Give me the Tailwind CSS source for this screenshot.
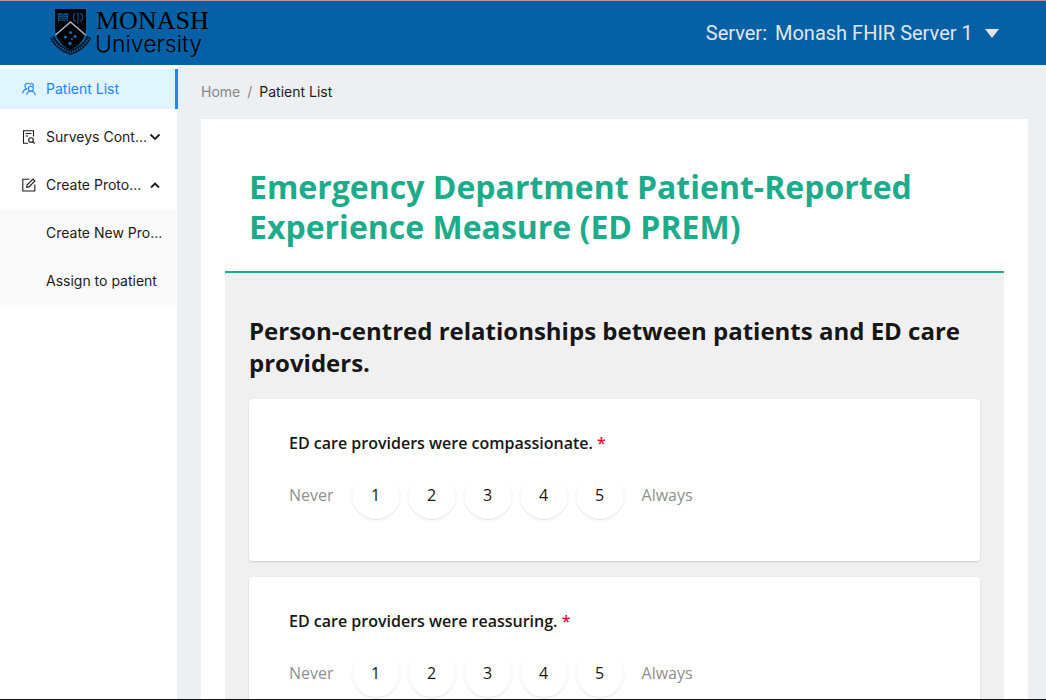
<!DOCTYPE html>
<html lang="en">
<head>
<meta charset="utf-8">
<meta name="viewport" content="width=device-width, initial-scale=1">
<title>Patient List</title>
<script src="https://cdn.jsdelivr.net/npm/@tailwindcss/browser@4"></script>
</head>
<body class="flex h-screen flex-col overflow-hidden border-t border-b border-t-[#b59a98] border-b-[#111111] bg-[#eeeff3] font-['Inter',sans-serif] text-sm text-[#1c1c1c]">
<header class="flex h-16 shrink-0 items-center justify-between bg-[#0461a6] pl-12 pr-[47px]">
  <a href="#" aria-label="Monash University" class="block">
    <svg width="166" height="56" viewBox="0 0 166 56" fill="#000">
      <path d="M4 32Q9 43 22.500 47.500Q36 43 41 32" fill="none" stroke="#04111f" stroke-width="4.600"/>
      <path d="M4 32.500Q9 43 22.500 47.500Q36 43 41 32.500" fill="none" stroke="#0461a6" stroke-width="2.200" stroke-dasharray="1.400 1.200"/>
      <path d="M7 4H38V24Q37 38 22.500 45Q8 38 7 24Z"/>
      <path d="M7.500 30L22.500 17L37.500 30" fill="none" stroke="#a9bccd" stroke-width="1.400"/>
      <path d="M10 8.500Q12.500 7.500 15 9Q17.500 7.500 20 8.500V16Q17.500 15 15 16.500Q12.500 15 10 16Z" fill="#0a4f85"/>
      <path d="M15 9V17M11 10.500h3M11 12.500h3M11 14.300h3M16 10.500h3M16 12.500h3M16 14.300h3" stroke="#000" stroke-width=".6"/>
      <path d="M27.500 8Q23 12 27.500 16.500M32.500 8Q37 12 32.500 16.500M30 7V18" fill="none" stroke="#0a559a" stroke-width="1.100"/>
      <g fill="#0b6fb8"><circle cx="22.500" cy="27.500" r="1.600"/><circle cx="17.500" cy="32" r="1.600"/><circle cx="27" cy="31.500" r="1.600"/><circle cx="24" cy="34" r="1"/><circle cx="22" cy="38.500" r="1.700"/></g>
      <text x="48" y="24" font-family="Liberation Serif, serif" font-size="26">MONASH</text>
      <text x="47" y="47" font-family="Inter, sans-serif" font-size="23" font-weight="300">University</text>
    </svg>
  </a>
  <div class="flex items-center gap-2 text-xl text-[#e3e5e8] font-['Roboto',sans-serif]">
    <label for="server">Server:</label>
    <div class="flex items-center gap-3">
      <select id="server" class="appearance-none bg-transparent outline-none">
        <option>Monash FHIR Server 1</option>
      </select>
      <svg width="14" height="9" viewBox="0 0 14 9" fill="currentColor" aria-hidden="true"><path d="M0 0H14L7 9Z"/></svg>
    </div>
  </div>
</header>
<div class="flex min-h-0 flex-1">
  <nav class="mr-px w-[177px] shrink-0 bg-white pt-1">
    <ul>
      <li class="-mr-px">
        <a href="#" class="flex h-10 items-center gap-2.5 border-r-[3px] border-[#1f84fb] bg-[#e0f5ff] pl-[22px] text-[#1f84fb]">
          <svg width="14" height="14" viewBox="0 0 14 14" fill="none" stroke="currentColor" stroke-width="1.100" stroke-linecap="round" aria-hidden="true"><circle cx="8.800" cy="6.800" r="2.500"/><path d="M4.800 12.800Q5.200 9.300 8.800 9.300Q12.600 9.300 13.200 12.800M8.400 2.500Q7.300 1 5.300 1.200Q3 1.600 2.900 4Q3 6.200 5 6.900Q1.400 7.500 .7 11M9 1.200Q11.300 1.500 11.500 4"/></svg>
          <span>Patient List</span>
        </a>
      </li>
      <li class="pt-2">
        <button type="button" aria-expanded="false" class="flex h-10 w-full items-center gap-2.5 pl-[22px] pr-4 text-left">
          <svg class="shrink-0" width="14" height="14" viewBox="0 0 14 14" fill="none" stroke="currentColor" stroke-width="1.100" aria-hidden="true"><path d="M6 13.200H1.500V.8H11.500V6.500M3.500 3.500H9.500M3.500 6H6"/><circle cx="9" cy="10" r="2.300"/><path d="M10.700 11.700L12.700 13.500"/></svg>
          <span class="min-w-0 flex-1 whitespace-nowrap">Surveys Cont...</span>
          <svg class="-ml-2 shrink-0" width="12" height="12" viewBox="0 0 12 12" fill="none" stroke="currentColor" stroke-width="1.800" aria-hidden="true"><path d="M1.500 3.500L6 8L10.500 3.500"/></svg>
        </button>
      </li>
      <li class="pt-2">
        <button type="button" aria-expanded="true" class="flex h-10 w-full items-center gap-2.5 pl-[22px] pr-4 text-left">
          <svg class="shrink-0" width="14" height="14" viewBox="0 0 14 14" fill="none" stroke="currentColor" stroke-width="1.100" aria-hidden="true"><path d="M7.500 1.200H.8V13H12.800V6.500M4.800 9.300L5 7L11 1L12.900 2.900L7 8.900Z"/></svg>
          <span class="min-w-0 flex-1 whitespace-nowrap">Create Proto...</span>
          <svg class="-ml-2 shrink-0" width="12" height="12" viewBox="0 0 12 12" fill="none" stroke="currentColor" stroke-width="1.800" aria-hidden="true"><path d="M2 8.500L6 4.500L10 8.500"/></svg>
        </button>
        <ul class="mt-1 bg-[#fafafa] py-1">
          <li><a href="#" class="block pl-[46px] leading-10 whitespace-nowrap">Create New Pro...</a></li>
          <li class="mt-2"><a href="#" class="block pl-[46px] leading-10 whitespace-nowrap">Assign to patient</a></li>
        </ul>
      </li>
    </ul>
  </nav>
  <main class="min-w-0 flex-1 overflow-hidden pl-[23px] pr-[18px]">
    <nav aria-label="Breadcrumb" class="flex h-[54px] items-center gap-[7px] text-[#85868a]">
      <a href="#">Home</a><span>/</span><span class="text-[#1c1c1c]">Patient List</span>
    </nav>
    <form class="bg-white px-6 font-['Open_Sans',sans-serif]">
      <div class="border-b-2 border-[#1eab8b] px-6 pt-12 pb-6">
        <h1 class="text-[32px] leading-10 font-bold text-[#1eab8b]">Emergency Department Patient-Reported Experience Measure (ED PREM)</h1>
      </div>
      <div class="bg-[#f0f0f0] px-6 pt-[42px] pb-6">
        <h2 class="mb-5 text-2xl leading-8 font-bold text-[#161616]">Person-centred relationships between patients and ED care providers.</h2>
        <div class="flex flex-col gap-4 text-base">
          <fieldset class="rounded bg-white px-10 pt-8 pb-[42px] shadow-[0_1px_2px_rgba(0,0,0,0.15)]">
            <legend class="float-left w-full font-semibold text-[#161616]">ED care providers were compassionate. <span class="text-[#e60a3e]">*</span></legend>
            <div class="clear-both flex items-center gap-[18px] pt-4 text-[#909090]">
              <span>Never</span>
              <div class="flex gap-2 text-[#161616]">
                <label class="flex size-12 items-center justify-center rounded-full shadow-[0_1px_2px_rgba(0,0,0,0.12)]"><input type="radio" name="compassionate" value="1" class="sr-only">1</label>
                <label class="flex size-12 items-center justify-center rounded-full shadow-[0_1px_2px_rgba(0,0,0,0.12)]"><input type="radio" name="compassionate" value="2" class="sr-only">2</label>
                <label class="flex size-12 items-center justify-center rounded-full shadow-[0_1px_2px_rgba(0,0,0,0.12)]"><input type="radio" name="compassionate" value="3" class="sr-only">3</label>
                <label class="flex size-12 items-center justify-center rounded-full shadow-[0_1px_2px_rgba(0,0,0,0.12)]"><input type="radio" name="compassionate" value="4" class="sr-only">4</label>
                <label class="flex size-12 items-center justify-center rounded-full shadow-[0_1px_2px_rgba(0,0,0,0.12)]"><input type="radio" name="compassionate" value="5" class="sr-only">5</label>
              </div>
              <span>Always</span>
            </div>
          </fieldset>
          <fieldset class="rounded bg-white px-10 pt-8 pb-[42px] shadow-[0_1px_2px_rgba(0,0,0,0.15)]">
            <legend class="float-left w-full font-semibold text-[#161616]">ED care providers were reassuring. <span class="text-[#e60a3e]">*</span></legend>
            <div class="clear-both flex items-center gap-[18px] pt-4 text-[#909090]">
              <span>Never</span>
              <div class="flex gap-2 text-[#161616]">
                <label class="flex size-12 items-center justify-center rounded-full shadow-[0_1px_2px_rgba(0,0,0,0.12)]"><input type="radio" name="reassuring" value="1" class="sr-only">1</label>
                <label class="flex size-12 items-center justify-center rounded-full shadow-[0_1px_2px_rgba(0,0,0,0.12)]"><input type="radio" name="reassuring" value="2" class="sr-only">2</label>
                <label class="flex size-12 items-center justify-center rounded-full shadow-[0_1px_2px_rgba(0,0,0,0.12)]"><input type="radio" name="reassuring" value="3" class="sr-only">3</label>
                <label class="flex size-12 items-center justify-center rounded-full shadow-[0_1px_2px_rgba(0,0,0,0.12)]"><input type="radio" name="reassuring" value="4" class="sr-only">4</label>
                <label class="flex size-12 items-center justify-center rounded-full shadow-[0_1px_2px_rgba(0,0,0,0.12)]"><input type="radio" name="reassuring" value="5" class="sr-only">5</label>
              </div>
              <span>Always</span>
            </div>
          </fieldset>
        </div>
      </div>
    </form>
  </main>
</div>
</body>
</html>
